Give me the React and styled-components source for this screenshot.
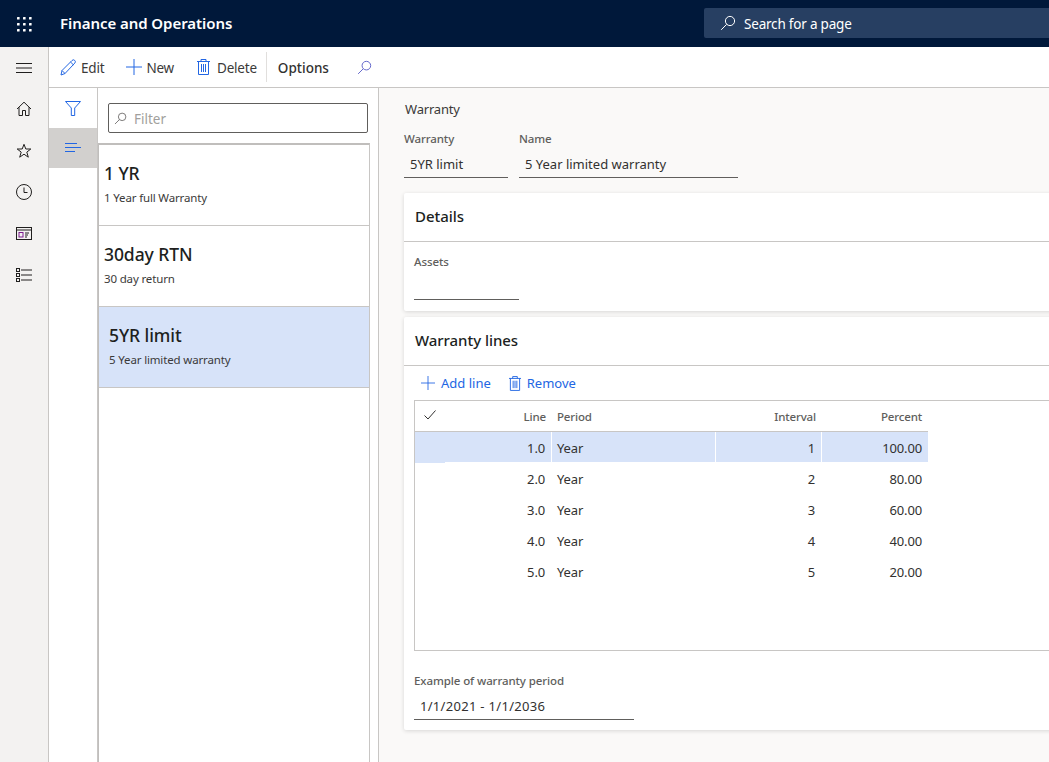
import styled, { createGlobalStyle } from 'styled-components';

const GlobalStyle = createGlobalStyle`
  html, body { margin: 0; height: 100%; overflow: hidden; }
  body { font-family: "Noto Sans", "Open Sans", sans-serif; color: #323130; background: #faf9f8; }
  * { box-sizing: border-box; }
`;

const blue = '#2266e3';
const selectedBlue = '#d7e3f9';

const Page = styled.div`
  width: 1049px;
  height: 762px;
  display: flex;
  flex-direction: column;
  overflow: hidden;
`;

const Header = styled.header`
  height: 47px;
  flex: none;
  background: #00183a;
  display: flex;
  align-items: center;
  color: #fff;
`;
const Waffle = styled.div`
  width: 48px;
  display: flex;
  justify-content: center;
`;
const AppName = styled.div`
  margin-left: 12px;
  margin-bottom: 2px;
  width: 644px;
  font-size: 15px;
  font-weight: 600;
  letter-spacing: -0.06px;
`;
const SearchPage = styled.div`
  flex: 1;
  height: 30px;
  margin-top: -1px;
  background: #273f62;
  border-radius: 2px 0 0 2px;
  display: flex;
  align-items: center;
  gap: 8px;
  padding: 2px 0 0 16px;
  font-size: 13.5px;
  letter-spacing: -0.2px;
  svg { margin-top: -2px; }
`;

const Body = styled.div`
  flex: 1;
  display: flex;
  min-height: 0;
`;
const NavRail = styled.nav`
  width: 49px;
  flex: none;
  background: #f3f2f1;
  border-right: 1px solid #c8c6c4;
  display: flex;
  flex-direction: column;
  align-items: center;
`;
const NavItem = styled.div`
  height: 41.5px;
  display: flex;
  align-items: center;
  justify-content: center;
`;
const Main = styled.div`
  flex: 1;
  min-width: 0;
  display: flex;
  flex-direction: column;
`;

const ActionBar = styled.div`
  height: 41px;
  flex: none;
  background: #fff;
  border-bottom: 1px solid #c8c6c4;
  display: flex;
  align-items: center;
  padding-left: 11px;
  font-size: 13.5px;
  letter-spacing: -0.2px;
`;
const Action = styled.div`
  display: flex;
  align-items: center;
  gap: ${p => p.$gap || 4}px;
  margin-right: ${p => p.$after || 0}px;
  color: #3b3a39;
`;
const ActionText = styled.span`
  padding-top: 2px;
`;
const BarDivider = styled.div`
  width: 1px;
  height: 30px;
  background: #e1dfdd;
  margin-left: 9px;
  margin-right: 11px;
`;
const OptionsLabel = styled.div`
  padding-top: 2px;
  font-weight: 500;
  color: #323130;
  letter-spacing: 0;
  margin-right: 28px;
`;

const Workspace = styled.div`
  flex: 1;
  display: flex;
  min-height: 0;
`;
const FilterRail = styled.div`
  width: 49px;
  flex: none;
  background: #fff;
  border-right: 1px solid #c8c6c4;
`;
const RailButton = styled.div`
  height: 40px;
  display: flex;
  align-items: center;
  justify-content: center;
  background: ${p => (p.$active ? '#d2d0ce' : 'transparent')};
`;
const ListPane = styled.aside`
  width: 281px;
  flex: none;
  background: #fff;
  border-right: 1px solid #c8c6c4;
  display: flex;
  flex-direction: column;
`;
const FilterBox = styled.div`
  margin: 15px 0 10px 10px;
  width: 260px;
  height: 30px;
  border: 1px solid #605e5c;
  border-radius: 2px;
  display: flex;
  align-items: center;
  gap: 7px;
  padding: 2px 0 0 5px;
  font-size: 13.5px;
  color: #a19f9d;
  svg { margin-top: -2px; }
`;
const ItemList = styled.div`
  flex: 1;
  width: 272px;
  border-top: 2px solid #c0bebc;
  border-left: 1px solid #c0bebc;
  border-right: 1px solid #c8c6c4;
`;
const Item = styled.div`
  height: 81px;
  padding: 16px 0 0 ${p => (p.$selected ? 10 : 5)}px;
  border-bottom: 1px solid #c8c6c4;
  background: ${p => (p.$selected ? selectedBlue : '#fff')};
`;
const ItemTitle = styled.div`
  font-size: 17.5px;
  line-height: 24px;
  color: #201f1e;
  font-weight: 500;
  letter-spacing: -0.08px;
`;
const ItemSub = styled.div`
  font-size: 11.5px;
  line-height: 16px;
  margin-top: 5px;
  color: #3b3a39;
  letter-spacing: -0.15px;
`;

const Content = styled.main`
  flex: 1;
  min-width: 0;
  padding: 12px 0 0 25px;
  background: #faf9f8;
  overflow: hidden;
`;
const Caption = styled.div`
  font-size: 13px;
  line-height: 18px;
  color: #3b3a39;
  margin-left: 1px;
  letter-spacing: -0.2px;
`;
const FieldRow = styled.div`
  display: flex;
  gap: 11px;
  margin-top: 13px;
  margin-bottom: 15px;
`;
const Field = styled.div`
  width: ${p => p.$width}px;
`;
const FieldLabel = styled.div`
  font-size: 11.5px;
  line-height: 16px;
  font-weight: 500;
  color: #605e5c;
  letter-spacing: -0.1px;
`;
const FieldValue = styled.div`
  height: 31px;
  padding: 8px 0 0 6px;
  font-size: 13px;
  line-height: 18px;
  color: #323130;
  border-bottom: 1px solid #605e5c;
  letter-spacing: 0;
`;
const Card = styled.section`
  width: 700px;
  background: #fff;
  border-radius: 2px;
  box-shadow: 0 1px 4px rgba(0, 0, 0, 0.14);
  margin-bottom: 6px;
  height: ${p => p.$height}px;
`;
const CardHeader = styled.h2`
  margin: 0;
  height: 49px;
  padding: 0 0 3px 11px;
  display: flex;
  align-items: center;
  font-size: 15px;
  font-weight: 500;
  color: #201f1e;
  border-bottom: 1px solid #c8c6c4;
  letter-spacing: -0.05px;
`;
const CardBody = styled.div`
  padding: ${p => p.$top ?? 12}px 0 0 10px;
`;
const AssetsValue = styled(FieldValue)`
  height: 30px;
  width: 105px;
`;
const LinesBar = styled.div`
  height: 34px;
  display: flex;
  align-items: center;
  gap: 18px;
  padding-left: 7px;
  font-size: 13px;
  color: ${blue};
`;
const LinesAction = styled.div`
  display: flex;
  align-items: center;
  gap: ${p => p.$gap}px;
`;
const Grid = styled.div`
  width: 660px;
  height: 251px;
  border: 1px solid #c8c6c4;
`;
const Row = styled.div`
  position: relative;
  width: 513px;
  height: 31px;
  display: grid;
  grid-template-columns: 137px 164px 106px 106px;
  align-items: center;
  font-size: ${p => (p.$head ? '11.5px' : '13px')};
  font-weight: ${p => (p.$head ? 500 : 400)};
  color: ${p => (p.$head ? '#605e5c' : '#323130')};
  letter-spacing: -0.15px;
  border-bottom: ${p => (p.$head ? '1px solid #c8c6c4' : 'none')};
  ${p => p.$selected && `
    background: linear-gradient(${selectedBlue}, ${selectedBlue}) top / 100% 30px no-repeat;
    &::after {
      content: '';
      position: absolute;
      left: 0;
      bottom: 0;
      width: 30px;
      height: 1px;
      background: ${selectedBlue};
    }
  `}
`;
const Cell = styled.div`
  height: 100%;
  display: flex;
  align-items: center;
  justify-content: ${p => (p.$right ? 'flex-end' : 'flex-start')};
  padding: ${p => (p.$right ? '0 6px 0 0' : '0 0 0 5px')};
  border-right: ${p => (p.$sep ? '1px solid #fff' : 'none')};
`;
const CheckCell = styled.span`
  position: absolute;
  left: 9px;
  top: 8px;
  line-height: 0;
`;
const PeriodField = styled(Field)`
  margin-top: 22px;
`;
const PeriodValue = styled(FieldValue)`
  letter-spacing: 0.3px;
`;

const stroke = { fill: 'none', strokeWidth: 1 };

const SearchIcon = ({ size = 16, color = '#fff' }) => (
  <svg width={size} height={size} viewBox="0 0 16 16" {...stroke} stroke={color}>
    <circle cx="10" cy="6" r="4.6" />
    <path d="M6.6 9.4 1.2 14.8" />
  </svg>
);
const WaffleIcon = () => (
  <svg width="16" height="16" viewBox="0 0 16 16" fill="#fff">
    {[1, 7, 13].flatMap(y => [1, 7, 13].map(x => <rect key={`${x}-${y}`} x={x} y={y} width="2.6" height="2.6" rx="0.5" />))}
  </svg>
);
const MenuIcon = () => (
  <svg width="16" height="12" viewBox="0 0 16 12" {...stroke} stroke="#201f1e">
    <path d="M0 1.5h16M0 6h16M0 10.5h16" />
  </svg>
);
const HomeIcon = () => (
  <svg width="16" height="16" viewBox="0 0 16 16" {...stroke} stroke="#201f1e">
    <path d="M1 8 8 1.2 15 8M3 6.2V14.5h3.5V9.5h3v5H13V6.2" />
  </svg>
);
const StarIcon = () => (
  <svg width="16" height="16" viewBox="0 0 16 16" {...stroke} stroke="#201f1e">
    <path d="M8 1.3 9.8 6h5l-4 3.1 1.5 5.1L8 11.2l-4.3 3 1.5-5.1-4-3.1h5z" />
  </svg>
);
const ClockIcon = () => (
  <svg width="16" height="16" viewBox="0 0 16 16" {...stroke} stroke="#201f1e">
    <circle cx="8" cy="8" r="7.5" />
    <path d="M8 3.5V8.5h3.5" />
  </svg>
);
const WorkspaceIcon = () => (
  <svg width="16" height="13" viewBox="0 0 16 13" {...stroke} stroke="#201f1e">
    <rect x="0.5" y="0.5" width="15" height="12" />
    <path d="M0.5 3h15" />
    <rect x="3" y="5.5" width="4" height="4.5" stroke="#7a1a8c" />
    <path d="M9 6h4M9 8h3M9 10h2" />
  </svg>
);
const ListIcon = () => (
  <svg width="16" height="14" viewBox="0 0 16 14" {...stroke} stroke="#201f1e">
    <rect x="0.5" y="0.5" width="3" height="3" />
    <rect x="0.5" y="5.5" width="3" height="3" />
    <rect x="0.5" y="10.5" width="3" height="3" />
    <path d="M5 2h11M5 7h11M5 12h11" />
  </svg>
);
const PencilIcon = () => (
  <svg width="16" height="17" viewBox="0 0 16 17" {...stroke} stroke={blue}>
    <path d="M1 16 2 11.5 12 1.5a1.6 1.6 0 0 1 2.8 2.6L5 14.5z" />
    <path d="M10.5 3 13.4 5.8M2 11.5 5 14.5" />
  </svg>
);
const PlusIcon = ({ size = 16 }) => (
  <svg width={size} height={size} viewBox="0 0 16 16" {...stroke} stroke={blue}>
    <path d="M8 0v16M0 8h16" />
  </svg>
);
const TrashIcon = ({ size = 16 }) => (
  <svg width={size - 3} height={size} viewBox="0 0 13 16" {...stroke} stroke={blue}>
    <path d="M0 2.5h13M4 2.5V.5h5v2M1.5 2.5v13h10v-13M4.5 5v8M6.5 5v8M8.5 5v8" />
  </svg>
);
const FunnelIcon = () => (
  <svg width="16" height="15" viewBox="0 0 16 15" {...stroke} stroke={blue}>
    <path d="M0.5 0.5h15L9.7 7v7.5H6.3V7z" />
  </svg>
);
const LinesIcon = () => (
  <svg width="16" height="10" viewBox="0 0 16 10" {...stroke} stroke={blue}>
    <path d="M0 .5h12M0 4.5h16M0 8.5h10" />
  </svg>
);
const CheckIcon = () => (
  <svg width="12" height="12" viewBox="0 0 12 12" {...stroke} stroke="#323130">
    <path d="M.5 6.5 4 10 11.5 1.5" />
  </svg>
);

const lines = [
  ['1.0', 'Year', '1', '100.00'],
  ['2.0', 'Year', '2', '80.00'],
  ['3.0', 'Year', '3', '60.00'],
  ['4.0', 'Year', '4', '40.00'],
  ['5.0', 'Year', '5', '20.00'],
];

export default function App() {
  return (
    <Page>
      <GlobalStyle />
      <Header>
        <Waffle><WaffleIcon /></Waffle>
        <AppName>Finance and Operations</AppName>
        <SearchPage><SearchIcon />Search for a page</SearchPage>
      </Header>
      <Body>
        <NavRail>
          <NavItem><MenuIcon /></NavItem>
          <NavItem><HomeIcon /></NavItem>
          <NavItem><StarIcon /></NavItem>
          <NavItem><ClockIcon /></NavItem>
          <NavItem><WorkspaceIcon /></NavItem>
          <NavItem><ListIcon /></NavItem>
        </NavRail>
        <Main>
          <ActionBar>
            <Action $gap={5} $after={22}><PencilIcon /><ActionText>Edit</ActionText></Action>
            <Action $after={23}><PlusIcon /><ActionText>New</ActionText></Action>
            <Action $gap={7}><TrashIcon /><ActionText>Delete</ActionText></Action>
            <BarDivider />
            <OptionsLabel>Options</OptionsLabel>
            <SearchIcon size={15} color="#5b5fc7" />
          </ActionBar>
          <Workspace>
            <FilterRail>
              <RailButton><FunnelIcon /></RailButton>
              <RailButton $active><LinesIcon /></RailButton>
            </FilterRail>
            <ListPane>
              <FilterBox><SearchIcon size={13} color="#605e5c" />Filter</FilterBox>
              <ItemList>
                <Item>
                  <ItemTitle>1 YR</ItemTitle>
                  <ItemSub>1 Year full Warranty</ItemSub>
                </Item>
                <Item>
                  <ItemTitle>30day RTN</ItemTitle>
                  <ItemSub>30 day return</ItemSub>
                </Item>
                <Item $selected>
                  <ItemTitle>5YR limit</ItemTitle>
                  <ItemSub>5 Year limited warranty</ItemSub>
                </Item>
              </ItemList>
            </ListPane>
            <Content>
              <Caption>Warranty</Caption>
              <FieldRow>
                <Field $width={104}>
                  <FieldLabel>Warranty</FieldLabel>
                  <FieldValue>5YR limit</FieldValue>
                </Field>
                <Field $width={219}>
                  <FieldLabel>Name</FieldLabel>
                  <FieldValue>5 Year limited warranty</FieldValue>
                </Field>
              </FieldRow>
              <Card $height={118}>
                <CardHeader>Details</CardHeader>
                <CardBody>
                  <FieldLabel>Assets</FieldLabel>
                  <AssetsValue />
                </CardBody>
              </Card>
              <Card $height={413}>
                <CardHeader>Warranty lines</CardHeader>
                <CardBody $top={0}>
                  <LinesBar>
                    <LinesAction $gap={6}><PlusIcon size={14} />Add line</LinesAction>
                    <LinesAction $gap={6}><TrashIcon size={15} />Remove</LinesAction>
                  </LinesBar>
                  <Grid>
                    <Row $head>
                      <CheckCell><CheckIcon /></CheckCell>
                      <Cell $right>Line</Cell>
                      <Cell>Period</Cell>
                      <Cell $right>Interval</Cell>
                      <Cell $right>Percent</Cell>
                    </Row>
                    {lines.map(([line, period, interval, percent], i) => (
                      <Row key={line} $selected={i === 0}>
                        <Cell $right $sep>{line}</Cell>
                        <Cell $sep>{period}</Cell>
                        <Cell $right $sep>{interval}</Cell>
                        <Cell $right>{percent}</Cell>
                      </Row>
                    ))}
                  </Grid>
                  <PeriodField $width={220}>
                    <FieldLabel>Example of warranty period</FieldLabel>
                    <PeriodValue>1/1/2021 - 1/1/2036</PeriodValue>
                  </PeriodField>
                </CardBody>
              </Card>
            </Content>
          </Workspace>
        </Main>
      </Body>
    </Page>
  );
}
